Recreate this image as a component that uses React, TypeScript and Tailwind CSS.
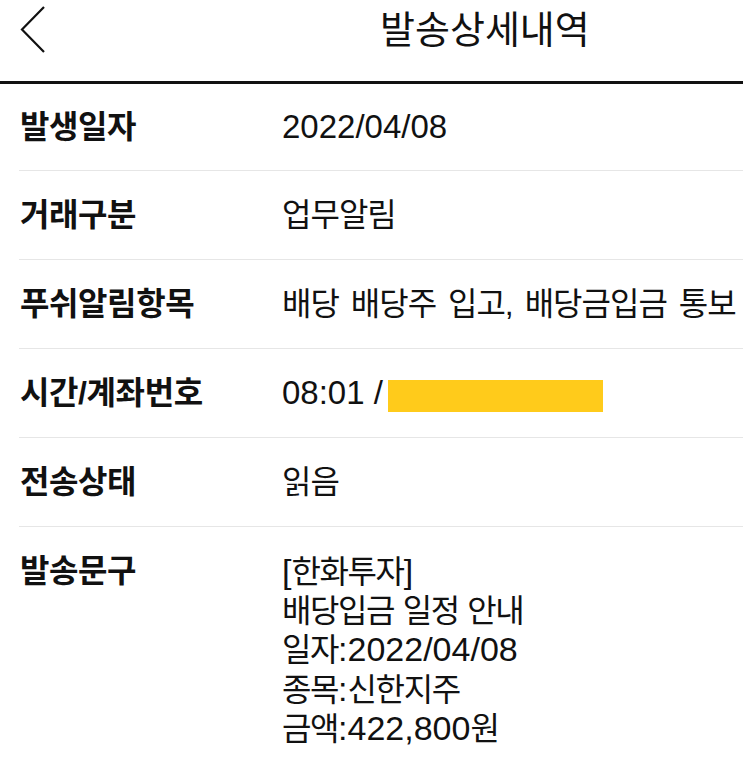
import React from 'react';

function L({ children, big }: { children: React.ReactNode; big?: boolean }) {
  return (
    <span className={`${big ? 'text-[34px]' : 'text-[33px]'} tracking-normal [word-spacing:0px]`}>{children}</span>
  );
}

const rows: { label: string; value: React.ReactNode }[] = [
  { label: '발생일자', value: <L>2022/04/08</L> },
  { label: '거래구분', value: '업무알림' },
  { label: '푸쉬알림항목', value: '배당 배당주 입고, 배당금입금 통보' },
  {
    label: '시간/계좌번호',
    value: (
      <span className="flex items-center">
        <L>08:01 /</L>
        <span className="ml-[5px] mt-[5px] inline-block h-[32px] w-[215px] bg-[#ffcb1b]" />
      </span>
    ),
  },
  { label: '전송상태', value: '읽음' },
];

export default function App() {
  return (
    <div className="min-h-screen w-[743px] overflow-hidden bg-white font-['Liberation_Sans','Noto_Sans_CJK_KR',sans-serif] text-[#111]">
      {/* Header */}
      <header className="h-[84px] border-b-[3px] border-[#111]">
        <div className="flex h-[60px] items-center">
          <svg width="30" height="50" viewBox="0 0 30 50" className="ml-[17px] -mt-[3px]">
            <path d="M27 3 L5 25.5 L27 48" fill="none" stroke="#111" strokeWidth="2.2" />
          </svg>
          <h1 className="ml-[333px] text-[38px] font-normal tracking-[0px]">발송상세내역</h1>
        </div>
      </header>

      <div className="pl-[19px]">
        {rows.map((r, i) => (
          <div
            key={r.label}
            className={`flex items-center border-b border-[#e6e6e6] ${i === 0 ? 'h-[87px]' : 'h-[89px]'}`}
          >
            <div className="w-[263px] shrink-0 pl-px text-[32px] font-bold tracking-[-0.4px]">{r.label}</div>
            <div className="whitespace-nowrap text-[32px] tracking-[-1px] [word-spacing:4px]">{r.value}</div>
          </div>
        ))}

        <div className="flex items-start pt-[25px]">
          <div className="w-[263px] shrink-0 pl-px text-[32px] leading-[38.5px] font-bold tracking-[-0.4px]">발송문구</div>
          <div className="whitespace-nowrap text-[32px] leading-[38.5px] tracking-[-1.4px] [word-spacing:1px]">
            <div><L big>[</L>한화투자<L big>]</L></div>
            <div>배당입금 일정 안내</div>
            <div>일자<L big>:2022/04/08</L></div>
            <div>종목<L big>:</L>신한지주</div>
            <div>금액<L big>:422,800</L>원</div>
          </div>
        </div>
      </div>
    </div>
  );
}
